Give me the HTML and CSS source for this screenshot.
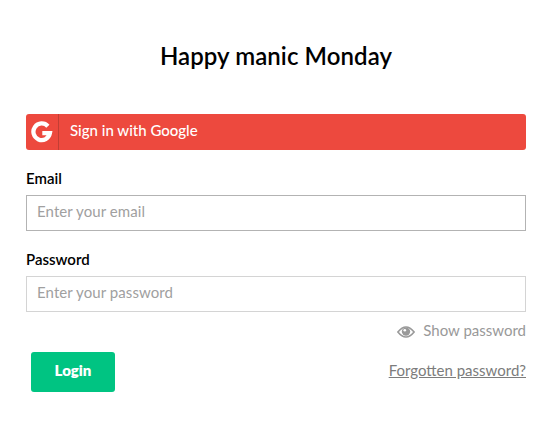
FILE: index.html
```html
<!DOCTYPE html>
<html lang="en">
<head>
<meta charset="utf-8">
<title>Login</title>
<link rel="stylesheet" href="styles.css">
</head>
<body>
<main class="login">
  <h1 class="title">Happy manic Monday</h1>
  <button class="google" type="button">
    <span class="google-icon"><svg width="22" height="22" viewBox="0 0 22 22"><path d="M16.9 5.2A8.3 8.3 0 1 0 18.9 12.2H11.3" fill="none" stroke="#fff" stroke-width="4.3"/></svg></span>
    <span class="google-text">Sign in with Google</span>
  </button>
  <label class="label" for="email">Email</label>
  <input class="input input-active" id="email" type="email" placeholder="Enter your email">
  <label class="label" for="password">Password</label>
  <input class="input" id="password" type="password" placeholder="Enter your password">
  <div class="show"><svg class="eye" width="18" height="12" viewBox="0 0 18 12"><path d="M.9 6Q9-4 17.1 6Q9 16 .9 6Z" fill="none" stroke="#999" stroke-width="1.6"/><circle cx="9" cy="5.6" r="4.2" fill="#999"/><circle cx="7.8" cy="4.3" r="1.3" fill="#fff"/></svg><span class="show-text">Show password</span></div>
  <div class="actions"><button class="submit" type="button">Login</button><a class="forgot" href="#">Forgotten password?</a></div>
</main>
</body>
</html>
```
FILE: styles.css
```css
* { box-sizing: border-box; }
body { margin: 0; background: #fff; color: #000; font: 15px/20px Lato, sans-serif; }
.login { display: flex; flex-direction: column; width: 500px; margin: 0 0 0 26px; padding-top: 41px; }
.title { margin: 0 0 43px; font-size: 24px; line-height: 30px; font-weight: 600; text-align: center; letter-spacing: 0.08px; }
button, input { font: inherit; }
.google { display: flex; height: 36px; margin: 0 0 18px; padding: 0; border: 0; border-radius: 3px; overflow: hidden; background: #ed493e; color: #fff; }
.google-icon { display: flex; align-items: center; justify-content: center; width: 33px; height: 36px; border-right: 1px solid #c23e34; }
.google-text { padding-left: 11px; line-height: 33px; font-weight: 500; }
.label { height: 27px; font-weight: 600; }
.input { height: 36px; margin: 0 0 18px; padding: 0 10px 4px; border: 1px solid #d4d4d4; border-radius: 0; outline: 0; background: #fff; letter-spacing: 0.08px; }
.input-active { border-color: #b3b3b3; }
.input::placeholder { color: #a0a0a0; opacity: 1; }
.show { display: flex; align-items: center; justify-content: flex-end; gap: 8px; height: 20px; margin-top: -9px; color: #999; }
.eye { margin-top: 2px; }
.show-text { padding-bottom: 2px; }
.actions { display: flex; justify-content: space-between; margin: 11px 0 0 5px; }
.submit { width: 84px; height: 40px; padding: 0 0 4px; border: 0; border-radius: 3px; background: #00c482; color: #fff; font-weight: 800; }
.forgot { line-height: 37px; color: #7c7c7c; }
```
